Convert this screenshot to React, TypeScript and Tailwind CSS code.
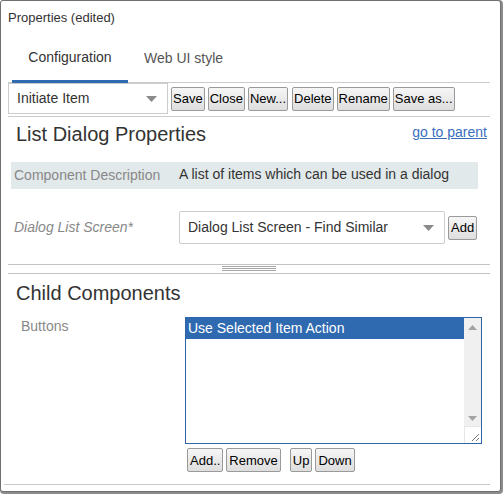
import React from "react";

function Btn({ children, className = "" }: { children: React.ReactNode; className?: string }) {
  return (
    <button
      className={`h-[24px] px-[1px] whitespace-nowrap border border-[#9a9a9a] rounded-[2px] bg-gradient-to-b from-[#f6f6f6] to-[#dedede] text-[13px] leading-none text-black ${className}`}
    >
      {children}
    </button>
  );
}

function Caret() {
  return (
    <svg width="11" height="6" viewBox="0 0 11 6">
      <path d="M0 0h11L5.5 6z" fill="#8a8a8a" />
    </svg>
  );
}

export default function App() {
  return (
    <div className="w-[503px] h-[496px] bg-white" style={{ fontFamily: '"Liberation Sans", Arial, sans-serif' }}>
      <div className="w-[501px] h-[492px] border border-[#707070] rounded-[3px] shadow-[1px_1px_0_1px_#8c8c8c] bg-white flex flex-col overflow-hidden">
        {/* Title */}
        <div className="pl-[7px] pt-[9px] text-[13px] leading-[16px] text-[#333]">Properties (edited)</div>

        {/* Tabs */}
        <div className="mx-[7px] mt-[11px] h-[46px] flex border-b border-[#cccccc] mr-[10px]">
          <div className="ml-[4px] w-[116px] border-b-[3px] border-[#2e6bb0] flex items-center justify-center text-[14px] text-[#333] pb-[2px] -mb-px">
            Configuration
          </div>
          <div className="ml-[16px] flex items-center text-[14px] text-[#555] pb-[2px]">Web UI style</div>
        </div>

        {/* Toolbar */}
        <div className="mx-[7px] mr-[10px] h-[34px] flex items-center gap-[3px] border-b border-[#cccccc] pb-[2px]">
          <div className="w-[160px] h-[31px] border border-[#cccccc] flex items-center justify-between pl-[8px] pr-[10px] text-[14px] text-[#333]">
            <span>Initiate Item</span>
            <Caret />
          </div>
          <Btn>Save</Btn>
          <Btn>Close</Btn>
          <Btn>New...</Btn>
          <Btn className="ml-px">Delete</Btn>
          <Btn>Rename</Btn>
          <Btn>Save as...</Btn>
        </div>

        {/* List Dialog Properties */}
        <div className="mx-[15px] mr-[13px] mt-[5px] flex items-center justify-between h-[24px]">
          <span className="text-[20px] text-[#333]">List Dialog Properties</span>
          <a className="text-[14px] text-[#3a6fc0] underline -mt-[4px]">go to parent</a>
        </div>

        <div className="ml-[10px] w-[467px] mt-[16px] h-[27px] bg-[#e2e9ea] flex items-center text-[14px]">
          <span className="w-[168px] pl-[3px] text-[#888]">Component Description</span>
          <span className="text-[#333] -mt-[2px]">A list of items which can be used in a dialog</span>
        </div>

        <div className="ml-[13px] mt-[22px] flex items-center h-[33px]">
          <span className="w-[165px] italic text-[14px] text-[#888]">Dialog List Screen*</span>
          <div className="w-[266px] h-[33px] border border-[#cccccc] rounded-[2px] flex items-center justify-between pl-[8px] pr-[10px] text-[14px] text-[#333]">
            <span>Dialog List Screen - Find Similar</span>
            <Caret />
          </div>
          <Btn className="ml-[3px] px-[2px]">Add</Btn>
        </div>

        {/* Splitter */}
        <div className="mx-[7px] mr-[10px] mt-[20px] h-[10px] border-y border-[#c4c4c4] flex justify-center">
          <div className="w-[54px] mt-px flex flex-col gap-px">
            <div className="h-px bg-[#a8a8a8]" />
            <div className="h-px bg-[#a8a8a8]" />
            <div className="h-px bg-[#a8a8a8]" />
          </div>
        </div>

        {/* Child Components */}
        <div className="ml-[15px] mt-[7px] text-[20px] leading-[24px] text-[#333]">Child Components</div>

        <div className="flex mt-[12px]">
          <span className="ml-[20px] w-[164px] text-[14px] text-[#888] -mt-[1px]">Buttons</span>
          <div>
            <div className="w-[297px] h-[127px] border border-[#2e64a8] flex relative">
              <div className="flex-1">
                <div className="h-[21px] bg-[#2f6ab0] text-white text-[14px] flex items-center pl-[2px]">Use Selected Item Action</div>
              </div>
              <div className="w-[17px] bg-[#f0f0f0] flex flex-col items-center justify-between pt-[7px] pb-[22px]">
                <svg width="9" height="5" viewBox="0 0 9 5"><path d="M0 5L4.5 0L9 5z" fill="#a3a3a3" /></svg>
                <svg width="9" height="5" viewBox="0 0 9 5"><path d="M0 0h9L4.5 5z" fill="#a3a3a3" /></svg>
              </div>
              <div className="absolute right-0 bottom-0 w-[17px] h-[17px] bg-white border-l border-t border-[#e6e6e6]">
                <svg width="17" height="17" viewBox="0 0 17 17">
                  <path d="M14 7L7 14M14 11L11 14" stroke="#777" strokeWidth="1" />
                </svg>
              </div>
            </div>
            <div className="flex mt-[4px] ml-[2px] gap-[3px]">
              <Btn className="px-[2px]">Add..</Btn>
              <Btn className="px-[2px] text-[#4a0000]">Remove</Btn>
              <Btn className="ml-[6px] px-[2px] text-[#4a0000]">Up</Btn>
              <Btn className="px-[2px] text-[#4a0000]">Down</Btn>
            </div>
          </div>
        </div>

        <div className="mx-[3px] mr-[10px] mt-[12px] h-[2px] border-t border-[#c8c8c8]" />
      </div>
    </div>
  );
}
